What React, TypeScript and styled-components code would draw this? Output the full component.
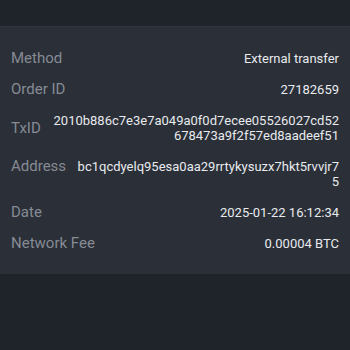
import React from "react";
import styled, { createGlobalStyle } from "styled-components";

const Global = createGlobalStyle`
  html, body {
    margin: 0;
    padding: 0;
    background: #1f242b;
  }
  body {
    font-family: Roboto, "Noto Sans", "Liberation Sans", sans-serif;
    -webkit-font-smoothing: antialiased;
  }
`;

const Screen = styled.div`
  width: 350px;
  height: 350px;
  background: #1f242b;
  padding-top: 26px;
  box-sizing: border-box;
`;

const Panel = styled.section`
  background: #2a2f38;
  border-top: 1px solid #30353e;
  padding: 16px 11px 15px;
  display: flex;
  flex-direction: column;
`;

const Row = styled.div<{ $top?: boolean }>`
  display: flex;
  justify-content: space-between;
  align-items: ${(p) => (p.$top ? "flex-start" : "center")};
  gap: 11px;
  padding: 8px 0;
`;

const Label = styled.span`
  flex: none;
  font-size: 15px;
  line-height: 15px;
  color: #868b94;
  white-space: nowrap;
`;

const Value = styled.span`
  font-size: 13px;
  line-height: 15px;
  color: #e8eaed;
  text-align: right;
  word-break: break-all;
  min-width: 0;
`;

const rows: { label: string; value: string; top?: boolean }[] = [
  { label: "Method", value: "External transfer" },
  { label: "Order ID", value: "27182659" },
  {
    label: "TxID",
    value: "2010b886c7e3e7a049a0f0d7ecee05526027cd52678473a9f2f57ed8aadeef51",
  },
  {
    label: "Address",
    value: "bc1qcdyelq95esa0aa29rrtykysuzx7hkt5rvvjr75",
    top: true,
  },
  { label: "Date", value: "2025-01-22 16:12:34" },
  { label: "Network Fee", value: "0.00004 BTC" },
];

export default function App() {
  return (
    <>
      <Global />
      <Screen>
        <Panel>
          {rows.map((r) => (
            <Row key={r.label} $top={r.top}>
              <Label>{r.label}</Label>
              <Value>{r.value}</Value>
            </Row>
          ))}
        </Panel>
      </Screen>
    </>
  );
}
